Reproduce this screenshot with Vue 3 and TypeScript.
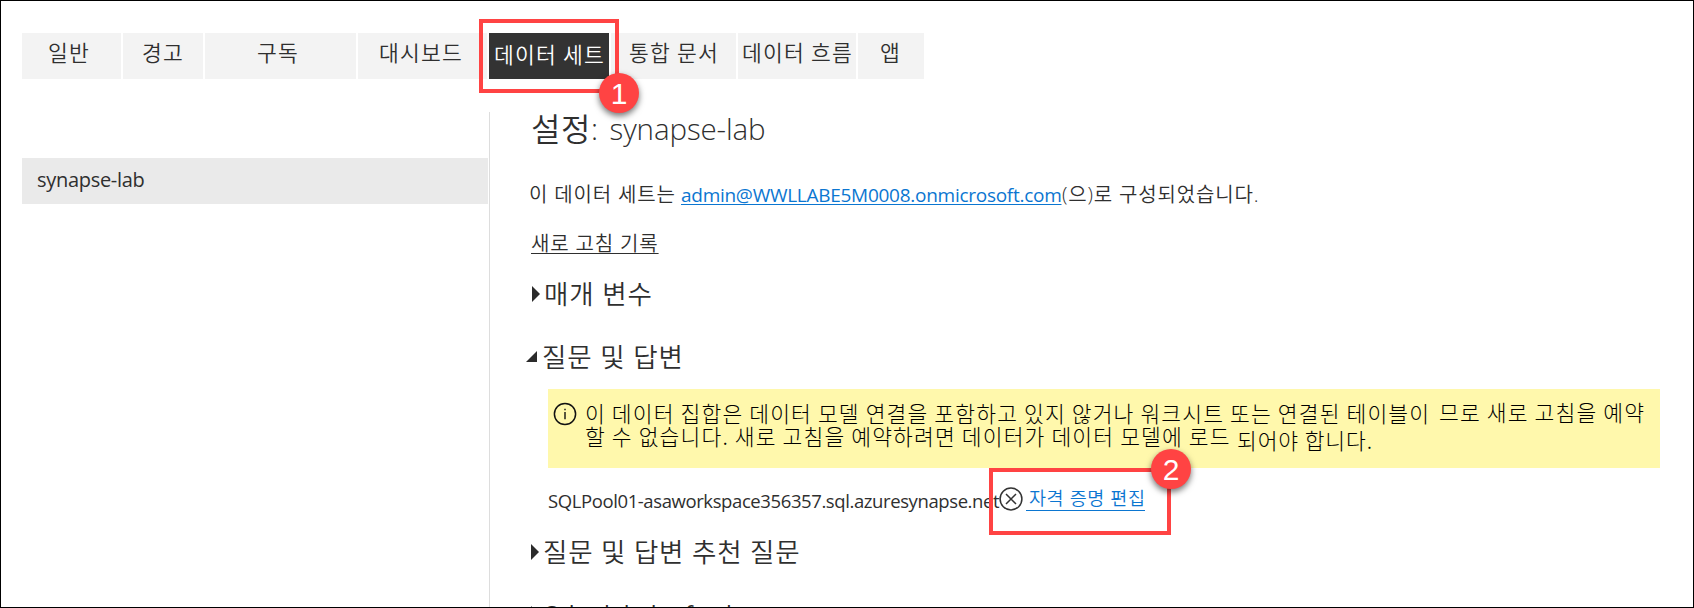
<script setup lang="ts">
interface Tab {
  id: string
  label: string
}

const tabs: Tab[] = [
  { id: 'general', label: '일반' },
  { id: 'alerts', label: '경고' },
  { id: 'subs', label: '구독' },
  { id: 'dash', label: '대시보드' },
  { id: 'datasets', label: '데이터 세트' },
  { id: 'books', label: '통합 문서' },
  { id: 'flows', label: '데이터 흐름' },
  { id: 'apps', label: '앱' },
]
const active = 'datasets'
</script>

<template>
  <div class="page">
    <nav class="tabs">
      <a v-for="t in tabs" :key="t.id" class="tab" :class="[t.id, { active: t.id === active }]"><span>{{ t.label }}</span></a>
    </nav>

    <div class="body">
      <aside class="side">
        <div class="item"><span>synapse-lab</span></div>
      </aside>

      <main class="main">
        <h1 class="title"><span class="ko">설정</span><span class="name">: synapse-lab</span></h1>
        <p class="config"><span class="lead">이 데이터 세트는</span><a class="mail">admin@WWLLABE5M0008.onmicrosoft.com</a><span class="tail">(으)로 구성되었습니다.</span></p>
        <p class="history"><a>새로 고침 기록</a></p>

        <h2 class="section params">
          <svg class="arrow" width="8" height="16" viewBox="0 0 8 16"><path d="M0 0L8 8L0 16Z" fill="#2b2b2b" /></svg>
          <span>매개 변수</span>
        </h2>
        <h2 class="section qna">
          <svg class="arrow" width="11" height="11" viewBox="0 0 11 11"><path d="M11 0V11H0Z" fill="#2b2b2b" /></svg>
          <span>질문 및 답변</span>
        </h2>

        <div class="notice">
          <svg class="info" width="24" height="24" viewBox="0 0 24 24" fill="none" stroke="#111">
            <circle cx="12" cy="12" r="10.6" stroke-width="1.5" />
            <path d="M12 10V17.2M12 6.7V8.3" stroke-width="1.4" />
          </svg>
          <div class="lines">
            <div class="line"><span class="l1a">이 데이터 집합은 데이터 모델 연결을 포함하고 있지 않거나 워크시트 또는 연결된 테이블이</span><span class="l1b">므로 새로 고침을 예약</span></div>
            <div class="line"><span class="l2a">할 수 없습니다. 새로 고침을 예약하려면 데이터가 데이터 모델에 로드</span><span class="l2b">되어야 합니다.</span></div>
          </div>
        </div>

        <div class="source">
          <span class="host">SQLPool01-asaworkspace356357.sql.azuresynapse.net</span>
          <svg class="fail" width="24" height="24" viewBox="0 0 24 24" fill="none" stroke="#333">
            <circle cx="12" cy="12" r="10.9" stroke-width="1.5" />
            <path d="M7 7L17 17M17 7L7 17" stroke-width="1.5" />
          </svg>
          <a class="edit"><span>자격 증명 편집</span></a>
        </div>

        <h2 class="section suggest">
          <svg class="arrow" width="8" height="16" viewBox="0 0 8 16"><path d="M0 0L8 8L0 16Z" fill="#2b2b2b" /></svg>
          <span>질문 및 답변 추천 질문</span>
        </h2>
        <h2 class="section refresh">
          <svg class="arrow" width="8" height="16" viewBox="0 0 8 16"><path d="M0 0L8 8L0 16Z" fill="#2b2b2b" /></svg>
          <span>Scheduled refresh</span>
        </h2>
      </main>
    </div>

    <div class="callout first"><b>1</b></div>
    <div class="callout second"><b>2</b></div>
  </div>
</template>

<style>
body { margin: 0; background: #fff; }
</style>

<style scoped>
.page {
  position: relative;
  box-sizing: border-box;
  width: 1694px;
  height: 608px;
  padding: 32px 0 0 21px;
  border: 1px solid #000;
  overflow: hidden;
  background: #fff;
  color: #2f2f2f;
  font-family: "Open Sans", "Noto Sans CJK KR", sans-serif;
  font-size: 20px;
}
span, a { white-space: nowrap; }
h1, h2, p { margin: 0; font-weight: 400; }

.tabs { display: flex; gap: 2px; height: 46px; margin-bottom: 33px; }
.tab {
  display: flex;
  align-items: center;
  box-sizing: border-box;
  height: 46px;
  padding-bottom: 8px;
  background: #f3f3f3;
  font-family: "Noto Sans CJK KR", sans-serif;
  font-size: 21.5px;
  font-weight: 350;
  line-height: 36px;
  letter-spacing: 1.2px;
}
.general { width: 99px; padding-left: 26px; }
.alerts { width: 80px; padding-left: 19px; }
.subs { width: 151px; padding-left: 52px; }
.dash { width: 129px; padding-left: 21px; }
.datasets { width: 120px; padding-left: 5px; }
.books { width: 125px; padding-left: 18px; }
.flows { width: 118px; padding-left: 4px; }
.apps { width: 66px; padding-left: 22px; }
.tab.active { background: #333; color: #fff; padding-bottom: 5px; }

.body { display: flex; height: 495px; }
.side { box-sizing: border-box; width: 468px; padding-top: 46px; border-right: 1px solid #ddd; }
.item {
  box-sizing: border-box;
  width: 466px;
  height: 46px;
  padding-left: 15px;
  background: #eaeaea;
  line-height: 44px;
}
.item span { letter-spacing: -0.3px; }

.main { flex: none; width: 1180px; }
.title { display: flex; height: 46px; padding-left: 41px; line-height: 34px; }
.title .ko { font: 350 32px/31px "Noto Sans CJK KR", sans-serif; width: 60px; letter-spacing: 0.5px; }
.title .name { font-size: 29.5px; font-weight: 300; letter-spacing: -0.1px; word-spacing: 4px; }
.config { display: flex; height: 48px; padding: 13px 0 0 39px; line-height: 48px; box-sizing: border-box; }
.lead, .tail { font-size: 20px; font-weight: 350; letter-spacing: 0.85px; }
.lead { width: 152px; }
.mail { width: 381px; font-size: 19px; letter-spacing: -0.27px; color: #0b76d1; text-decoration: underline; text-underline-offset: 2px; text-decoration-thickness: 1px; }
.history { height: 48px; padding-left: 41px; line-height: 75px; }
.history a { font-size: 20px; font-weight: 350; letter-spacing: 0.85px; text-decoration: underline; text-underline-offset: 2px; text-decoration-thickness: 1px; }

.section { display: flex; align-items: center; height: 36px; font-size: 26.5px; font-weight: 350; line-height: 36px; letter-spacing: 0.85px; }
.section .arrow { flex: none; }
.params { margin-top: 22px; padding-left: 42px; gap: 4px; }
.qna { margin-top: 27px; padding-left: 36px; gap: 5px; }
.qna .arrow { margin-bottom: 2px; }

.notice {
  display: flex;
  box-sizing: border-box;
  width: 1112px;
  height: 79px;
  margin: 14px 0 0 58px;
  padding: 12px 0 0 5px;
  background: #fff8ac;
  color: #000;
}
.info { flex: none; margin: 1px 8px 0 0; }
.line { display: flex; height: 23px; font-family: "Noto Sans CJK KR", sans-serif; font-size: 21.5px; font-weight: 300; line-height: 23px; letter-spacing: 1.15px; }
.l1a { width: 854px; }
.l2a { width: 652px; }
.l1b { margin-top: -1px; }
.l2b { margin-top: 4px; letter-spacing: 0.9px; }

.source { display: flex; height: 44px; margin-top: 9px; padding-left: 58px; align-items: center; }
.host { width: 451px; padding-top: 2px; font-size: 18.5px; letter-spacing: -0.4px; }
.fail { flex: none; }
.edit { box-sizing: border-box; width: 119px; height: 24px; margin-left: 3px; padding-left: 3px; color: #0b76d1; border-bottom: 1px solid #0b76d1; font-size: 18.5px; font-weight: 350; line-height: 22px; letter-spacing: 0.6px; }
.suggest { margin-top: 13px; padding-left: 41px; gap: 4px; letter-spacing: 0.8px; }
.refresh { margin-top: 26px; padding-left: 41px; gap: 6px; font-size: 23px; font-weight: 400; letter-spacing: 0; }

/* Numbered callouts lie over the page content. */
.callout { position: absolute; box-sizing: border-box; border: 4px solid #ff4343; }
.callout b {
  position: absolute;
  right: -24px;
  width: 40px;
  height: 40px;
  border-radius: 50%;
  background: #ff4343;
  color: #fff;
  box-shadow: 0 3px 6px rgba(0, 0, 0, 0.55);
  font: 400 30px/41px "Liberation Sans", Arial, sans-serif;
  text-align: center;
}
.first { left: 478px; top: 18px; width: 140px; height: 74px; }
.first b { top: 50px; }
.second { left: 988px; top: 467px; width: 182px; height: 67px; }
.second b { top: -23px; }
</style>
